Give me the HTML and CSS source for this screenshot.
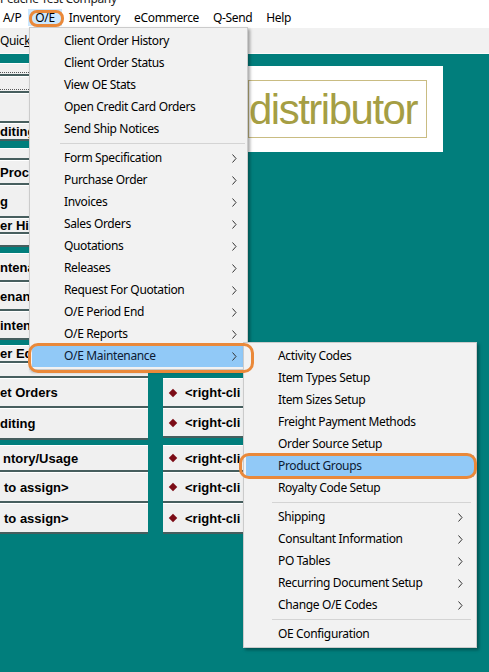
FILE: index.html
```html
<!DOCTYPE html>
<html lang="en">

<head>
    <meta charset="UTF-8">
    <meta name="viewport" content="width=device-width, initial-scale=1.0">
    <title>Order Entry</title>
    <link rel="stylesheet" href="styles.css">
</head>

<body>
    <div class="app">
        <div class="caption"><span>Peache Test Company</span></div>
        <div class="menubar">
            <span class="mb-item">A/P</span>
            <span class="mb-item open">O/E</span>
            <span class="mb-item">Inventory</span>
            <span class="mb-item">eCommerce</span>
            <span class="mb-item">Q-Send</span>
            <span class="mb-item">Help</span>
        </div>
        <div class="toolbar"><span>Quic<u>k</u></span></div>

        <div class="desk">
            <div class="col-left">
                <div class="btn focus" style="height: 13px"></div>
                <div class="btn focus" style="height: 17px"></div>
                <div class="btn" style="height: 30px"></div>
                <div class="btn" style="height: 18px">diting</div>
                <div class="btn gap7" style="height: 12px"></div>
                <div class="btn" style="height: 25px">Proc</div>
                <div class="btn" style="height: 33px">g</div>
                <div class="btn" style="height: 16px">er His</div>
                <div class="btn" style="height: 13px"></div>
                <div class="btn gap6" style="height: 29px">ntena</div>
                <div class="btn" style="height: 29px">enan</div>
                <div class="btn" style="height: 29px">inten</div>
                <div class="btn gap5" style="height: 18px">er Ed</div>
                <div class="btn" style="height: 15px"></div>
                <div class="btn" style="height: 30px">et Orders</div>
                <div class="btn" style="height: 32px">diting</div>
                <div class="btn gap5 in3" style="height: 27px">ntory/Usage</div>
                <div class="btn in4" style="height: 31px">to assign&gt;</div>
                <div class="btn in4" style="height: 31px">to assign&gt;</div>
            </div>

            <div class="col-right">
                <div class="logo">
                    <div class="logo-inner">distributor</div>
                </div>
                <div class="rc-list">
                    <div class="btn rc" style="height: 30px"><i class="dot"></i>&lt;right-cli</div>
                    <div class="btn rc" style="height: 30px"><i class="dot"></i>&lt;right-cli</div>
                    <div class="btn rc gap7" style="height: 27px"><i class="dot"></i>&lt;right-cli</div>
                    <div class="btn rc" style="height: 31px"><i class="dot"></i>&lt;right-cli</div>
                    <div class="btn rc" style="height: 31px"><i class="dot"></i>&lt;right-cli</div>
                </div>
            </div>
        </div>

        <!-- O/E drop-down -->
        <div class="menu main-menu">
            <div class="mi">Client Order History</div>
            <div class="mi">Client Order Status</div>
            <div class="mi">View OE Stats</div>
            <div class="mi">Open Credit Card Orders</div>
            <div class="mi">Send Ship Notices</div>
            <div class="sep"></div>
            <div class="mi sub">Form Specification<svg class="arrow" viewBox="0 0 5 9"><polyline points="0.5,0.5 4,4.5 0.5,8.5" /></svg></div>
            <div class="mi sub">Purchase Order<svg class="arrow" viewBox="0 0 5 9"><polyline points="0.5,0.5 4,4.5 0.5,8.5" /></svg></div>
            <div class="mi sub">Invoices<svg class="arrow" viewBox="0 0 5 9"><polyline points="0.5,0.5 4,4.5 0.5,8.5" /></svg></div>
            <div class="mi sub">Sales Orders<svg class="arrow" viewBox="0 0 5 9"><polyline points="0.5,0.5 4,4.5 0.5,8.5" /></svg></div>
            <div class="mi sub">Quotations<svg class="arrow" viewBox="0 0 5 9"><polyline points="0.5,0.5 4,4.5 0.5,8.5" /></svg></div>
            <div class="mi sub">Releases<svg class="arrow" viewBox="0 0 5 9"><polyline points="0.5,0.5 4,4.5 0.5,8.5" /></svg></div>
            <div class="mi sub">Request For Quotation<svg class="arrow" viewBox="0 0 5 9"><polyline points="0.5,0.5 4,4.5 0.5,8.5" /></svg></div>
            <div class="mi sub">O/E Period End<svg class="arrow" viewBox="0 0 5 9"><polyline points="0.5,0.5 4,4.5 0.5,8.5" /></svg></div>
            <div class="mi sub">O/E Reports<svg class="arrow" viewBox="0 0 5 9"><polyline points="0.5,0.5 4,4.5 0.5,8.5" /></svg></div>
            <div class="mi sub hl">O/E Maintenance<svg class="arrow" viewBox="0 0 5 9"><polyline points="0.5,0.5 4,4.5 0.5,8.5" /></svg></div>
        </div>

        <!-- O/E Maintenance fly-out -->
        <div class="menu sub-menu">
            <div class="mi">Activity Codes</div>
            <div class="mi">Item Types Setup</div>
            <div class="mi">Item Sizes Setup</div>
            <div class="mi">Freight Payment Methods</div>
            <div class="mi">Order Source Setup</div>
            <div class="mi hl">Product Groups</div>
            <div class="mi">Royalty Code Setup</div>
            <div class="sep"></div>
            <div class="mi sub">Shipping<svg class="arrow" viewBox="0 0 5 9"><polyline points="0.5,0.5 4,4.5 0.5,8.5" /></svg></div>
            <div class="mi sub">Consultant Information<svg class="arrow" viewBox="0 0 5 9"><polyline points="0.5,0.5 4,4.5 0.5,8.5" /></svg></div>
            <div class="mi sub">PO Tables<svg class="arrow" viewBox="0 0 5 9"><polyline points="0.5,0.5 4,4.5 0.5,8.5" /></svg></div>
            <div class="mi sub">Recurring Document Setup<svg class="arrow" viewBox="0 0 5 9"><polyline points="0.5,0.5 4,4.5 0.5,8.5" /></svg></div>
            <div class="mi sub">Change O/E Codes<svg class="arrow" viewBox="0 0 5 9"><polyline points="0.5,0.5 4,4.5 0.5,8.5" /></svg></div>
            <div class="sep"></div>
            <div class="mi">OE Configuration</div>
        </div>

        <!-- orange call-out rings -->
        <div class="ring ring-oe"></div>
        <div class="ring ring-maint"></div>
        <div class="ring ring-pg"></div>
    </div>
</body>

</html>
```

FILE: styles.css
```css
body {
    margin: 0;
    overflow: hidden;
    background-color: #017e7c;
    font-family: "Noto Sans", "Open Sans", sans-serif;
    font-size: 12px;
    letter-spacing: -0.35px;
    color: #000;
}

.app {
    position: relative;
    width: 489px;
    height: 672px;
    overflow: hidden;
}

.caption {
    height: 7px;
    overflow: hidden;
    background-color: #fff;
}

.caption span {
    display: block;
    margin-top: -8px;
    line-height: 14px;
    color: #222;
}

.menubar {
    height: 21px;
    display: flex;
    align-items: center;
    margin-left: -4px;
    background-color: #fff;
}

.mb-item {
    line-height: 17px;
    padding: 0 7px;
}

.mb-item.open {
    background-color: #cce8ff;
}

.toolbar {
    height: 25px;
    display: flex;
    align-items: center;
    background-color: #f1f1f1;
    border-bottom: 1px solid #fafafa;
}

/* teal desktop with the button panels */
.desk {
    display: flex;
    align-items: flex-start;
    padding-top: 9px;
}

.col-left {
    width: 148px;
    display: flex;
    flex-direction: column;
}

.btn {
    box-sizing: border-box;
    display: flex;
    align-items: center;
    padding-left: 0;
    background-color: #f0f0f0;
    border-top: 1px solid #fff;
    border-bottom: 2px solid #465e5e;
    font-family: "Liberation Sans", Arial, sans-serif;
    font-weight: bold;
    font-size: 13px;
    letter-spacing: 0;
    white-space: nowrap;
    overflow: hidden;
}

.btn.focus {
    background-image: linear-gradient(to right, #555 50%, transparent 50%);
    background-size: 2px 1px;
    background-repeat: repeat-x;
    background-position: 0 calc(100% - 1px);
}

.gap7 {
    margin-top: 7px;
}

.gap6 {
    margin-top: 6px;
}

.gap5 {
    margin-top: 5px;
}

.in3 {
    padding-left: 3px;
}

.in4 {
    padding-left: 4px;
}

.col-right {
    margin-left: 15px;
    width: 300px;
    display: flex;
    flex-direction: column;
}

.logo {
    box-sizing: border-box;
    margin-top: 3px;
    margin-left: 77px;
    width: 203px;
    height: 86px;
    padding: 14px 16px 14px 8px;
    background-color: #fff;
}

.logo-inner {
    height: 58px;
    box-sizing: border-box;
    border: 1px solid #c9bc82;
    padding-right: 15px;
    padding-top: 1px;
    text-align: right;
    line-height: 56px;
    font-family: "Liberation Sans", Arial, sans-serif;
    font-size: 42px;
    letter-spacing: -1.5px;
    color: #a59e44;
}

.rc-list {
    margin-top: 226px;
    width: 80px;
    display: flex;
    flex-direction: column;
}

.btn.rc {
    padding-left: 6px;
}

.dot {
    width: 6px;
    height: 6px;
    margin-right: 9px;
    margin-left: 1px;
    background-color: #7c0c16;
    transform: rotate(45deg);
    flex-shrink: 0;
}

/* drop-down menus */
.menu {
    position: absolute;
    box-sizing: border-box;
    padding: 2px;
    background-color: #f2f2f2;
    border: 1px solid #cbcbcb;
    box-shadow: 2px 2px 3px rgba(0, 0, 0, 0.35);
}

.main-menu {
    left: 29px;
    top: 27px;
    width: 219px;
    height: 343px;
}

.sub-menu {
    left: 243px;
    top: 342px;
    width: 234px;
    height: 306px;
}

.mi {
    height: 22px;
    line-height: 22px;
    padding-left: 32px;
    display: flex;
    align-items: center;
    white-space: nowrap;
}

.mi.hl {
    background-color: #91c9f7;
    color: #0c1a33;
}

.arrow {
    width: 5px;
    height: 9px;
    margin-left: auto;
    margin-right: 8px;
    fill: none;
    stroke: #333;
    stroke-width: 1;
}

.sub-menu .arrow {
    margin-right: 11px;
}

.sep {
    height: 7px;
    display: flex;
    align-items: center;
    margin-left: 28px;
}

.sep::after {
    content: "";
    flex: 1;
    height: 1px;
    background-color: #d4d4d4;
}

.sub-menu .sep {
    margin-left: 26px;
    margin-right: 3px;
}

/* orange call-outs drawn over the menus */
.ring {
    position: absolute;
    box-sizing: border-box;
    border: 3.5px solid #ea893a;
    border-radius: 10px;
}

.ring-oe {
    left: 29px;
    top: 10px;
    width: 35px;
    height: 17px;
    border-width: 3px;
    border-radius: 8px;
}

.ring-maint {
    left: 28px;
    top: 343px;
    width: 226px;
    height: 30px;
}

.ring-pg {
    left: 239px;
    top: 453px;
    width: 238px;
    height: 26px;
}
```
